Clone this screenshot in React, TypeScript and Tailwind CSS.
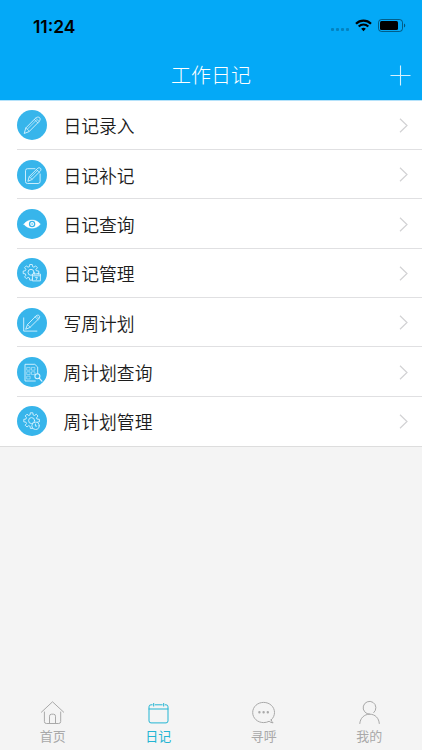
import type { ReactNode } from 'react'

type MenuItem = {
  label: string
  icon: ReactNode
}

type Tab = {
  label: string
  active?: boolean
  icon: ReactNode
}

// Closed outline of a cog with eight teeth
const gearPath = (cx: number, cy: number, inner: number, outer: number) => {
  const points: string[] = []
  for (let i = 0; i < 8; i++) {
    const steps: [number, number][] = [[-0.26, inner], [-0.16, outer], [0.16, outer], [0.26, inner]]
    steps.forEach(([offset, r]) => {
      const a = (i * Math.PI) / 4 + offset
      points.push(`${(cx + r * Math.cos(a)).toFixed(2)} ${(cy + r * Math.sin(a)).toFixed(2)}`)
    })
  }
  return `M${points.join('L')}Z`
}

function RoundIcon({ children }: { children: ReactNode }) {
  return (
    <svg
      viewBox="0 0 30 30"
      className="h-[30px] w-[30px] shrink-0"
      fill="none"
      stroke="#d9f3ff"
      strokeWidth="0.9"
      strokeLinecap="round"
      strokeLinejoin="round"
    >
      <circle cx="15" cy="15" r="15" fill="#37b5eb" stroke="none" />
      {children}
    </svg>
  )
}

const menu: MenuItem[] = [
  {
    label: '日记录入',
    icon: (
      <>
        <path d="M7.3 23.1l1.5-5.1 9.7-9.8c1.400-1.300 3-1.400 4-.6s.8 2.600-.4 3.900l-9.700 9.800z" />
        <path d="M17.300 9.500l3.600 3.400M18.600 8.200l3.600 3.300M8.800 18l3.600 3.200M10.600 18.900l8.500-8.500" strokeWidth="0.7" />
      </>
    ),
  },
  {
    label: '日记补记',
    icon: (
      <>
        <path d="M18 8.700h-7.500a2 2 0 0 0-2 2v10.800a2 2 0 0 0 2 2h10.600a2 2 0 0 0 2-2V14" />
        <path d="M11 20.900l1.200-4.200 8-8c1.100-1.100 2.400-1.200 3.200-.5s.7 2-.3 3.100l-8 8z" />
        <path d="M19.300 9.600l3 2.800M12.200 16.700l2.900 2.600M13.800 17.300l7-7" strokeWidth="0.7" />
      </>
    ),
  },
  {
    label: '日记查询',
    icon: (
      <>
        <path d="M6.800 15.200c4.200-5.600 12.200-5.600 16.600 0-4.400 5.400-12.400 5.400-16.600 0z" fill="#fff" stroke="#fff" strokeWidth="0.4" />
        <circle cx="15.100" cy="15" r="3.200" fill="#37b5eb" stroke="none" />
        <circle cx="15.100" cy="15" r="1.900" fill="#fff" stroke="none" />
        <circle cx="15.100" cy="15" r="0.8" fill="#37b5eb" stroke="none" />
      </>
    ),
  },
  {
    label: '日记管理',
    icon: (
      <>
        <path d={gearPath(14, 14.3, 5.9, 7.9)} />
        <circle cx="14" cy="14.300" r="3" />
        <rect x="15.800" y="16" width="7.600" height="6.900" fill="#37b5eb" />
        <path d="M15.800 17.800h7.600M17.600 16v-1M21.600 16v-1M18.600 19.400h1.800l-1 2.100" />
      </>
    ),
  },
  {
    label: '写周计划',
    icon: (
      <>
        <path d="M6.700 9.900v13.200h13.200" />
        <path d="M8.800 20.900l1.700-4.300 8.400-8.600c1-1 2.400-1.100 3.200-.4s.7 2.100-.3 3.100l-8.600 8.500z" />
        <path d="M18 8.900l3.100 2.800M19.200 7.800l2.900 2.700M10.500 16.600l2.700 2.600" strokeWidth="0.7" />
      </>
    ),
  },
  {
    label: '周计划查询',
    icon: (
      <>
        <path d="M18.300 24H8V7.300h9.800l2.900 2.800v7" />
        <path d="M10.100 10.400h3v2.800h-3zM14.900 10.400h3v2.800h-3zM10.100 14.800h3v2.800h-3zM14.900 14.800h3v2.800h-3zM10.100 19.200h3V22h-3z" strokeWidth="0.55" />
        <circle cx="20.400" cy="19.200" r="2.500" fill="#37b5eb" strokeWidth="1.100" />
        <path d="M22.200 21.100l2.700 3" strokeWidth="1.300" />
      </>
    ),
  },
  {
    label: '周计划管理',
    icon: (
      <>
        <path d={gearPath(14.6, 14.6, 5.9, 7.9)} />
        <circle cx="14.600" cy="14.600" r="3" />
        <circle cx="18.500" cy="19.800" r="3.700" fill="#37b5eb" />
        <path d="M18.400 18v2.100h1.300" />
      </>
    ),
  },
]

const tabs: Tab[] = [
  {
    label: '首页',
    icon: (
      <>
        <path d="M1.400 12.200L12.500 1.800l11.200 10.400" />
        <path d="M4.400 12v9.500a2 2 0 0 0 2 2h12.300a2 2 0 0 0 2-2V12" />
        <path d="M9.500 23.300v-7.100a2 2 0 0 1 2-2h2a2 2 0 0 1 2 2v7.100" />
      </>
    ),
  },
  {
    label: '日记',
    active: true,
    icon: (
      <>
        <path d="M6.200 4.800H5a2 2 0 0 0-2 2v14.100a2 2 0 0 0 2 2h15a2 2 0 0 0 2-2V6.800a2 2 0 0 0-2-2h-.8M9.200 4.800h7M3 9h19" />
        <path d="M7.700 3.400v2.700M17.700 3.400v2.700" />
      </>
    ),
  },
  {
    label: '寻呼',
    icon: (
      <>
        <path d="M20.200 19.900c2-1.800 3.300-4.400 3.300-7.400 0-5.700-4.800-10.100-10.900-10.100S1.700 6.800 1.700 12.500s4.800 10.100 10.900 10.100c2 0 3.900-.5 5.500-1.300 1.200.9 2.500 1.500 4 1.600-1-.8-1.600-1.800-1.900-3z" />
        <path d="M8.400 12.300h.02M12.600 12.300h.02M16.800 12.300h.02" strokeWidth="2.400" />
      </>
    ),
  },
  {
    label: '我的',
    icon: (
      <>
        <path d="M16.800 12.600a6.400 6.400 0 1 0-4.100 1.600" />
        <path d="M2.800 23.500c.3-5.300 4.400-9.300 9.900-9.300s9.300 4 9.600 9.300" />
      </>
    ),
  },
]

function StatusBar() {
  return (
    <div className="flex h-[50px] items-start justify-between pt-[16px] pr-[16px] pl-[33px] text-black">
      <span className="font-[Inter] text-[17.4px] leading-[21px] font-semibold">11:24</span>
      <div className="flex items-center pt-[3px]">
        <div className="mt-[8px] flex gap-[2px]">
          {[0, 1, 2, 3].map(i => (
            <span key={i} className="h-[3px] w-[3px] rounded-[1px] bg-[#0382bf]" />
          ))}
        </div>
        <svg viewBox="0 0 17 13" className="ml-[6px] h-[13px] w-[17px]" fill="none" stroke="#000" strokeWidth="2.2">
          <path d="M1 4.700c4.200-4.200 10.800-4.200 15 0" />
          <path d="M3.700 7.500c2.700-2.700 6.900-2.700 9.600 0" />
          <path d="M6.200 9.700c1.400-1.200 3.200-1.200 4.600 0L8.500 12.200z" fill="#000" stroke="none" />
        </svg>
        <svg viewBox="0 0 28 13" className="ml-[6px] h-[13px] w-[28px]">
          <rect x="0.5" y="0.5" width="24" height="12" rx="3" fill="none" stroke="#000" strokeOpacity="0.45" />
          <rect x="2" y="2" width="18" height="9" rx="1.5" fill="#000" />
          <path d="M26 4.500c1.700.6 1.700 3.400 0 4z" fill="#000" fillOpacity="0.5" />
        </svg>
      </div>
    </div>
  )
}

export default function App() {
  return (
    <div className="flex h-[750px] w-[422px] flex-col overflow-hidden bg-[#f4f4f4] font-['Noto_Sans_CJK_SC',sans-serif]">
      {/* Header */}
      <header className="h-[100.7px] shrink-0 border-b border-[#b5e2fa] bg-[#04a9f7]">
        <StatusBar />
        <div className="grid h-[50px] grid-cols-[1fr_auto_1fr] items-center">
          <h1 className="col-start-2 text-[20px] leading-[50px] font-light text-white">工作日记</h1>
          <svg viewBox="0 0 21 21" className="mr-[11px] h-[21px] w-[21px] justify-self-end" stroke="#d5f1ff" strokeWidth="1.1">
            <path d="M.5 10.500h20M10.500.5v20" />
          </svg>
        </div>
      </header>

      {/* Menu */}
      <ul className="shrink-0 border-b border-[#dddddd] bg-white">
        {menu.map((item, index) => (
          <li key={item.label} className="flex h-[49.35px] items-center pl-[17px]">
            <RoundIcon>{item.icon}</RoundIcon>
            <div className="ml-[16.5px] flex h-full flex-1 items-center justify-between pr-[14.5px]">
              <span className="text-[17.8px] leading-[26px] font-[350] text-[#1c1c1c]">{item.label}</span>
              <svg viewBox="0 0 9 15" className="h-[15px] w-[9px]" fill="none" stroke="#d2d2d4" strokeWidth="1.2">
                <path d="M1 .7l7 6.800-7 6.800" />
              </svg>
            </div>
            {index < menu.length - 1 && <span className="-ml-[405px] h-px w-[405px] self-end bg-[#e0e0e2]" />}
          </li>
        ))}
      </ul>

      {/* Tab bar */}
      <nav className="mt-auto grid h-[50px] grid-cols-4">
        {tabs.map(tab => (
          <button
            key={tab.label}
            className={`flex flex-col items-center ${tab.active ? 'text-[#23b5d3]' : 'text-[#a9a9a9]'}`}
          >
            <svg viewBox="0 0 25 25" className="h-[25px] w-[25px]" fill="none" stroke="currentColor" strokeWidth="1" strokeLinecap="round" strokeLinejoin="round">
              {tab.icon}
            </svg>
            <span className="mt-[1px] text-[13px] leading-[19px]">{tab.label}</span>
          </button>
        ))}
      </nav>
    </div>
  )
}
